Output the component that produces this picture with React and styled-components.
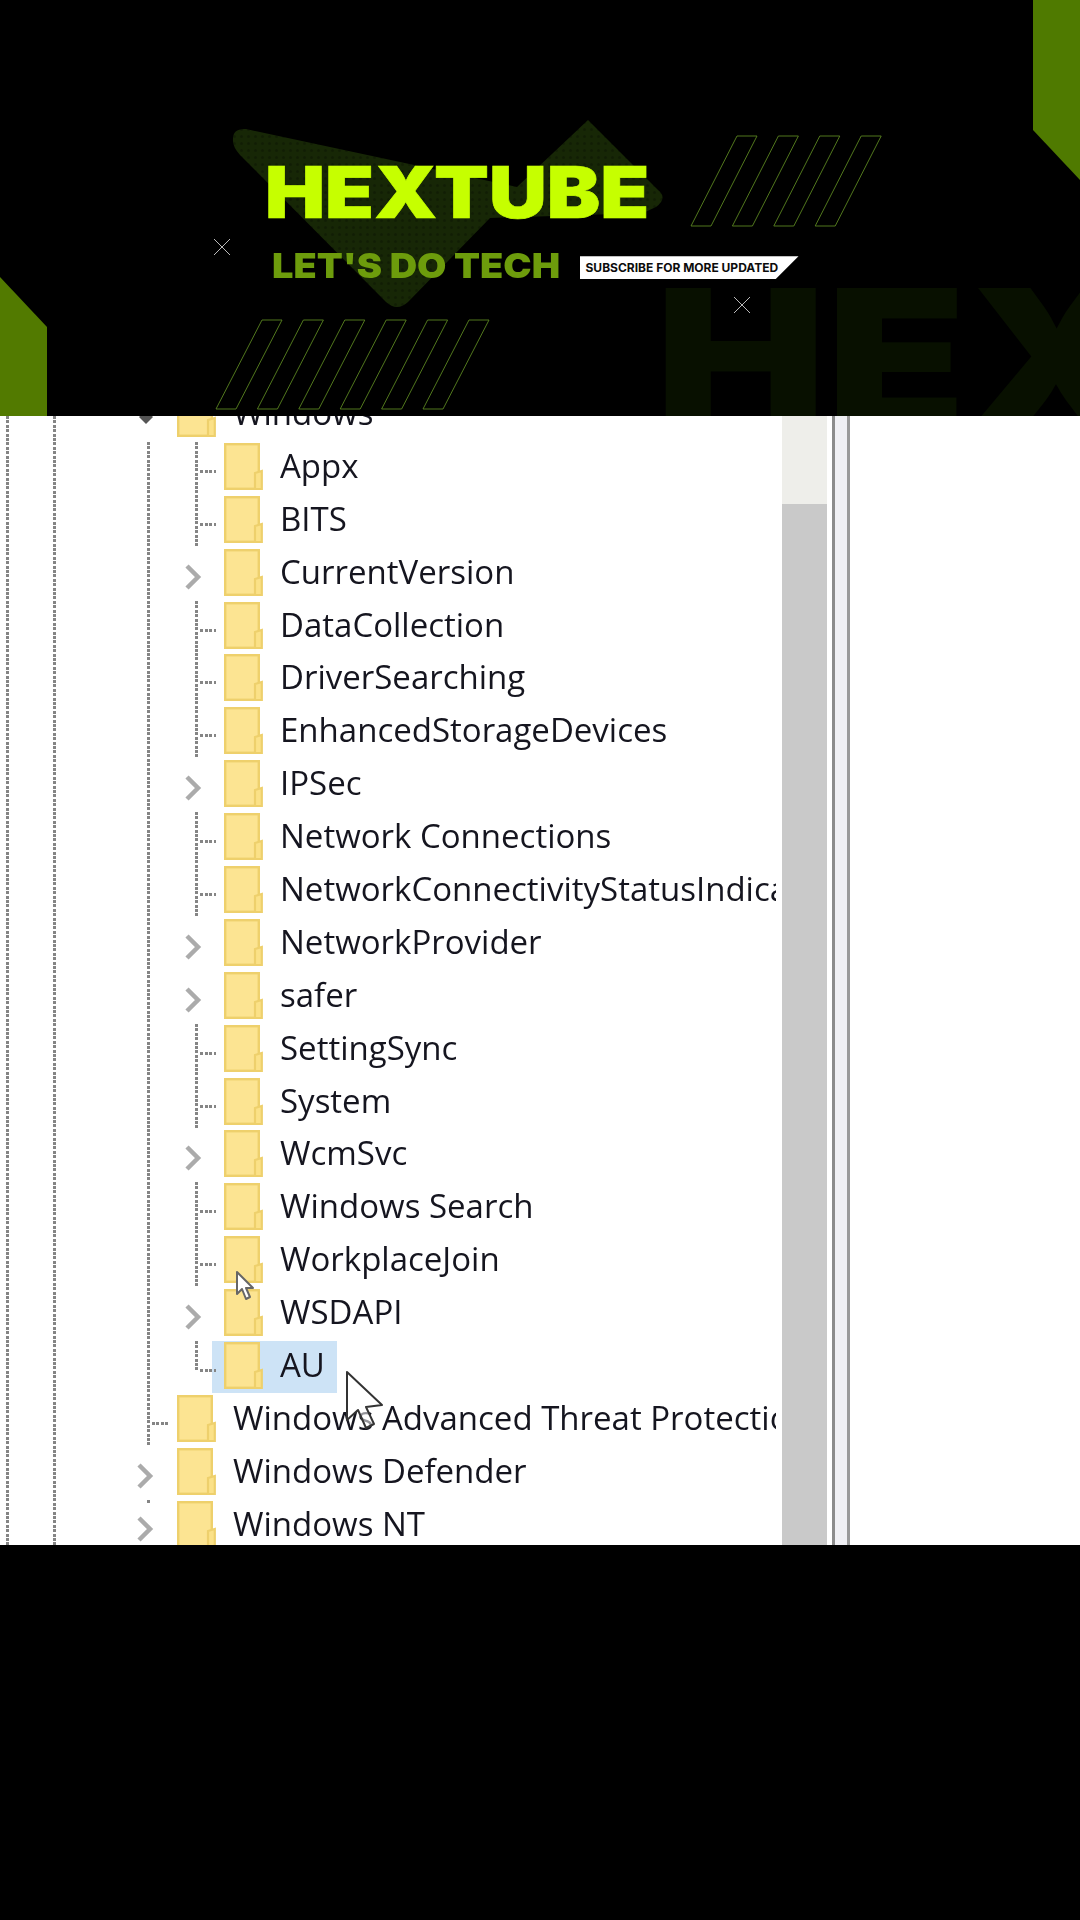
import React from "react";
import styled, { createGlobalStyle } from "styled-components";

const Global = createGlobalStyle`
  html, body { margin: 0; padding: 0; background: #000; }
  #root { width: 1080px; height: 1920px; overflow: hidden; }
`;

const Page = styled.div`
  width: 1080px; height: 1920px; background: #000;
  display: flex; flex-direction: column;
`;

/* ---------- banner ---------- */
const Banner = styled.header`
  position: relative; height: 416px; overflow: hidden; background: #000; flex: none;
  padding: 157px 0 0 264.5px; box-sizing: border-box;
`;
const Decor = styled.svg`
  position: absolute; left: 0; top: 0; width: 1080px; height: 416px;
`;
const GhostWord = styled.span`
  position: absolute; left: 655px; top: 262px;
  font: 900 192px/1 Inter, "Liberation Sans", sans-serif;
  color: #081000; white-space: nowrap;
  transform: scaleX(1.19); transform-origin: left top;
`;
const Title = styled.h1`
  position: relative; margin: 0;
  font: 900 71.5px/1 Inter, "Liberation Sans", sans-serif;
  color: #c6ff00; -webkit-text-stroke: 0.6px #c6ff00;
  transform: scaleX(1.12); transform-origin: left top; width: max-content;
`;
const TagRow = styled.div`
  position: relative; display: flex; align-items: center; gap: 18px;
  margin: 20px 0 0 7px;
`;
const Tag = styled.span`
  display: block; width: 290px; flex: none;
  font: 900 34.4px/1 Inter, "Liberation Sans", sans-serif;
  color: #6d9c0c; white-space: nowrap;
  transform: scaleX(1.103); transform-origin: left center;
`;
const Badge = styled.span`
  display: block; background: #fff; color: #0c0c0c; margin-top: 4px;
  font: 700 12px/23px Inter, "Liberation Sans", sans-serif;
  height: 23px; width: 219px; padding-left: 6px; box-sizing: border-box;
  clip-path: polygon(0 0, 100% 0, 89.5% 100%, 0 100%); white-space: nowrap;
`;

/* ---------- tree ---------- */
const TreePanel = styled.main`
  position: relative; height: 1129px; flex: none; display: flex; background: #fff; overflow: hidden;
`;
const Viewport = styled.div`
  width: 776px; margin-right: 6px; flex: none; overflow: hidden; filter: blur(0.6px);
  background-image:
    repeating-linear-gradient(to bottom, #858585 0 3px, transparent 3px 4.4px),
    repeating-linear-gradient(to bottom, #858585 0 3px, transparent 3px 4.4px);
  background-size: 3px 100%, 3px 100%;
  background-position: 6px 0, 53px 0;
  background-repeat: no-repeat;
`;
const List = styled.ul`
  list-style: none; margin: -27px 0 0; padding: 0;
`;
const dotsV = `repeating-linear-gradient(to bottom, #858585 0 3px, transparent 3px 4.4px)`;
const dotsH = `repeating-linear-gradient(to right, #858585 0 3px, transparent 3px 4.5px)`;
const Row = styled.li`
  height: 52.9px; display: flex; padding-left: 147px; white-space: nowrap;
`;
const Stem = styled.span`
  width: 48px; flex: none;
  background: ${dotsV} left top / 3px 100% no-repeat;
`;
const Branch = styled.span`
  width: ${p => p.$w}px; flex: none; position: relative;
  background-image: ${p => p.$line ? dotsV : "none"}, ${p => p.$tick ? dotsH : "none"};
  background-size: 3px ${p => p.$len ? `${p.$len}px` : "100%"}, 16px 3px;
  background-position: 0 0, 5px 28px;
  background-repeat: no-repeat;
`;
const Chevron = styled.svg`
  position: absolute; left: ${p => p.$x}px; top: 15px;
`;
const Diamond = styled(Chevron)`
  top: 14px;
`;
const Item = styled.span`
  display: flex; align-items: flex-start; height: 52px;
  margin-left: ${p => p.$selected ? -12 : 0}px;
  padding: 0 ${p => p.$selected ? 12 : 0}px;
  background: ${p => p.$selected ? "#cde3f6" : "transparent"};
`;
const Label = styled.span`
  margin-left: 17px;
  font: 400 33px/48px "Open Sans", "Noto Sans", sans-serif;
  color: #15151f;
`;
const FolderSvg = styled.svg`
  flex: none; margin-top: 1px;
`;

const Folder = () => (
  <FolderSvg width="39" height="47" viewBox="0 0 39 47">
    <rect x="1.2" y="1.2" width="33.6" height="44.6" fill="#fce492" stroke="#eed06c" strokeWidth="2.4" />
    <path d="M31 46 V30 L37.8 28 V46 Z" fill="#fbe188" stroke="#eed06c" strokeWidth="2.2" />
  </FolderSvg>
);

const Chev = ({ x }) => (
  <Chevron $x={x} width="18" height="28" viewBox="0 0 18 28">
    <path d="M3 3 L14 14 L3 25" fill="none" stroke="#ababab" strokeWidth="4.5" />
  </Chevron>
);

const level3 = [
  ["Appx"], ["BITS"], ["CurrentVersion", 1], ["DataCollection"], ["DriverSearching"],
  ["EnhancedStorageDevices"], ["IPSec", 1], ["Network Connections"],
  ["NetworkConnectivityStatusIndicator"], ["NetworkProvider", 1], ["safer", 1],
  ["SettingSync"], ["System"], ["WcmSvc", 1], ["Windows Search"], ["WorkplaceJoin"], ["WSDAPI", 1],
];

/* scrollbar + splitter */
const Scrollbar = styled.div`
  width: 45px; flex: none; background: #eeeeea; padding-top: 88px; box-sizing: border-box; filter: blur(0.5px);
`;
const Thumb = styled.div`
  height: 100%; background: #c9c9c9;
`;
const Splitter = styled.div`
  width: 18px; flex: none; margin-left: 5px; background: #f0f0f4; filter: blur(0.5px);
  border-left: 3px solid #8c8c8c; border-right: 3px solid #9a9a9a; box-sizing: border-box;
`;
const Cursor = styled.svg`
  position: absolute; left: ${p => p.$x}px; top: ${p => p.$y}px;
`;

const Bottom = styled.div`
  flex: 1; background: #000;
`;

const stripes = (x0, y0, x1, y1, n, w, step, skew) =>
  Array.from({ length: n }, (_, i) => {
    const b = x0 + i * step;
    return `M${b} ${y1} L${b + skew} ${y0} L${b + skew + w} ${y0} L${b + w} ${y1} Z`;
  }).join(" ");

export default function App() {
  return (
    <Page>
      <Global />
      <Banner>
        <GhostWord>HEX</GhostWord>
        <Decor viewBox="0 0 1080 416">
          <defs>
            <pattern id="dots" width="7" height="7" patternUnits="userSpaceOnUse">
              <rect width="7" height="7" fill="#172706" />
              <circle cx="3.5" cy="3.5" r="1.6" fill="#111e04" />
            </pattern>
          </defs>
          <path d="M1033 0 H1080 V180 L1033 130 Z" fill="#4f7a00" />
          <path d="M0 277 L47 327 V416 H0 Z" fill="#527a00" />
          <path
            d="M246 129 Q232 128 233 141 Q233 147 240 155 L386 302 Q397 312 408 302 L490 218 L643 213 L656 207 Q668 198 658 190 L588 120 L517 187 Z"
            fill="url(#dots)"
          />
          <path d={stripes(691, 136, 0, 226, 4, 20, 41.4, 46)} fill="none" stroke="#5a8420" strokeWidth="0.9" />
          <path d={stripes(216, 320, 0, 409, 6, 20, 41.4, 46)} fill="none" stroke="#5a8420" strokeWidth="0.9" />
          <path d="M214 239 L230 255 M230 239 L214 255 M734 297 L750 313 M750 297 L734 313" stroke="#cfcfcf" strokeWidth="0.9" />
        </Decor>
        <Title>HEXTUBE</Title>
        <TagRow>
          <Tag>LET'S DO TECH</Tag>
          <Badge>SUBSCRIBE FOR MORE UPDATED</Badge>
        </TagRow>
      </Banner>

      <TreePanel>
        <Viewport>
          <List>
            <Row>
              <Branch $w={30}>
                <Diamond $x={-10} width="18" height="28" viewBox="0 0 18 28">
                  <path d="M2 14 L9 7 L16 14 L9 21 Z" fill="#555" />
                </Diamond>
              </Branch>
              <Item><Folder /><Label>Windows</Label></Item>
            </Row>
            {level3.map(([name, exp]) => (
              <Row key={name}>
                <Stem />
                <Branch $w={29} $line={!exp} $tick={!exp}>{exp ? <Chev x={-11} /> : null}</Branch>
                <Item><Folder /><Label>{name}</Label></Item>
              </Row>
            ))}
            <Row>
              <Stem />
              <Branch $w={29} $line $tick $len={31} />
              <Item $selected><Folder /><Label>AU</Label></Item>
            </Row>
            <Row>
              <Branch $w={30} $line $tick />
              <Item><Folder /><Label>Windows Advanced Threat Protection</Label></Item>
            </Row>
            <Row>
              <Branch $w={30}><Chev x={-11} /></Branch>
              <Item><Folder /><Label>Windows Defender</Label></Item>
            </Row>
            <Row>
              <Branch $w={30} $line $len={3}><Chev x={-11} /></Branch>
              <Item><Folder /><Label>Windows NT</Label></Item>
            </Row>
          </List>
        </Viewport>
        <Scrollbar><Thumb /></Scrollbar>
        <Splitter />
        <Cursor $x={234} $y={854} width="22" height="32" viewBox="0 0 22 32">
          <path d="M3 2 V24 L8 19 L12 29 L16 27 L12 18 L19 18 Z" fill="#fff" stroke="#666" strokeWidth="2" strokeLinejoin="round" />
        </Cursor>
        <Cursor $x={344} $y={954} width="42" height="62" viewBox="0 0 42 62">
          <path d="M3 2 V50 L14 40 L22 58 L30 54 L22 37 L38 35 Z" fill="#fff" fillOpacity="0.55" stroke="#333" strokeWidth="2" strokeLinejoin="round" />
        </Cursor>
      </TreePanel>
      <Bottom />
    </Page>
  );
}
